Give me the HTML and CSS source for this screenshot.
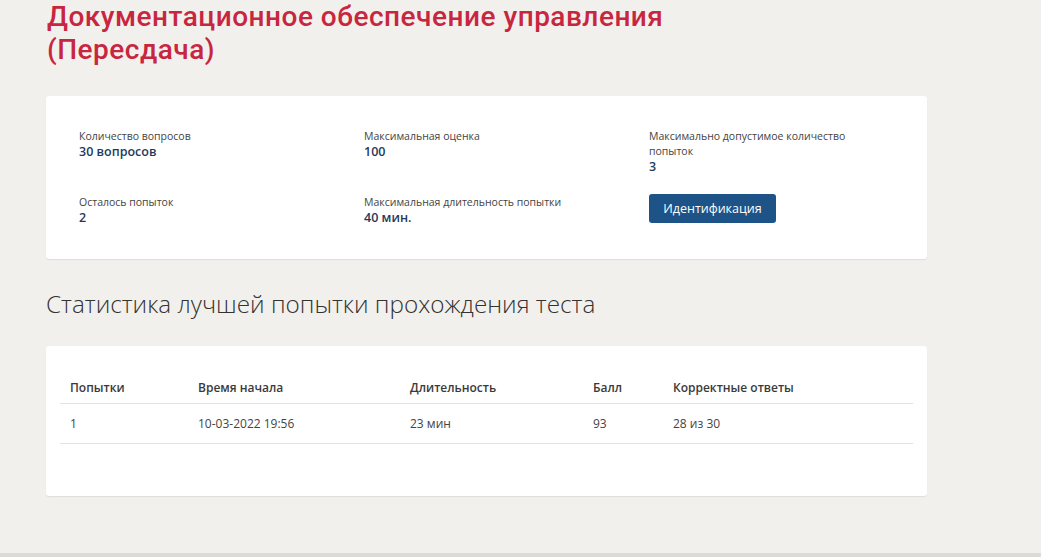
FILE: index.html
```html
<!DOCTYPE html>
<html lang="ru">
<head>
<meta charset="utf-8">
<link rel="stylesheet" href="styles.css">
</head>
<body>
<div class="page">
  <h1 class="title">Документационное обеспечение управления<br>(Пересдача)</h1>

  <div class="card info">
    <div class="item">
      <div class="label">Количество вопросов</div>
      <div class="value">30 вопросов</div>
    </div>
    <div class="item">
      <div class="label">Максимальная оценка</div>
      <div class="value">100</div>
    </div>
    <div class="item">
      <div class="label">Максимально допустимое количество попыток</div>
      <div class="value">3</div>
    </div>
    <div class="item">
      <div class="label">Осталось попыток</div>
      <div class="value">2</div>
    </div>
    <div class="item">
      <div class="label">Максимальная длительность попытки</div>
      <div class="value">40 мин.</div>
    </div>
    <div class="item">
      <button class="btn">Идентификация</button>
    </div>
  </div>

  <h2 class="subtitle">Статистика лучшей попытки прохождения теста</h2>

  <div class="card stats">
    <table class="table">
      <thead>
        <tr>
          <th class="c1">Попытки</th>
          <th class="c2">Время начала</th>
          <th class="c3">Длительность</th>
          <th class="c4">Балл</th>
          <th class="c5">Корректные ответы</th>
        </tr>
      </thead>
      <tbody>
        <tr>
          <td>1</td>
          <td>10-03-2022 19:56</td>
          <td>23 мин</td>
          <td>93</td>
          <td>28 из 30</td>
        </tr>
      </tbody>
    </table>
  </div>
</div>
<div class="footer-band"></div>
</body>
</html>
```

FILE: styles.css
```css
html, body {
  margin: 0;
  padding: 0;
}
body {
  background: #f2f0ed;
  font-family: "Open Sans", "Noto Sans", sans-serif;
  color: #333;
  height: 557px;
  overflow: hidden;
  position: relative;
}
.page {
  padding: 0 114px 0 46px;
}
.title {
  margin: 0;
  padding: 0 0 0 1px;
  font-family: Roboto, "Open Sans", sans-serif;
  font-weight: 500;
  font-size: 28px;
  line-height: 33px;
  letter-spacing: 0.5px;
  color: #c8263f;
}
.card {
  background: #fff;
  border-radius: 3px;
  box-shadow: 0 1px 1px rgba(0,0,0,0.08);
}
.info {
  margin-top: 30px;
  height: 163px;
  box-sizing: border-box;
  padding: 33px 0 0 33px;
  display: grid;
  grid-template-columns: 285px 285px 215px;
  grid-template-rows: 66px auto;
}
.label {
  font-size: 10.5px;
  line-height: 15px;
  color: #444;
}
.value {
  font-size: 12.5px;
  line-height: 16px;
  font-weight: 600;
  color: #1e3a5c;
}
.btn {
  margin-top: -1px;
  width: 127px;
  height: 29px;
  background: #1d5387;
  color: #fff;
  border: 0;
  border-radius: 3px;
  font-family: "Open Sans", sans-serif;
  font-size: 12.5px;
  font-weight: 500;
  padding: 0;
}
.subtitle {
  margin: 29px 0 0 0;
  font-weight: 300;
  font-size: 24.3px;
  line-height: 32px;
  color: #333;
}
.stats {
  margin-top: 26px;
  height: 150px;
  box-sizing: border-box;
  padding: 25px 14px 0 14px;
}
.table {
  width: 100%;
  border-collapse: collapse;
  font-size: 12px;
}
.table th {
  text-align: left;
  font-weight: 600;
  color: #3a3a3a;
  padding: 8px 10px 6px;
  line-height: 18px;
  border-bottom: 1px solid #e2e2e2;
}
.table td {
  padding: 10px 10px 10px;
  line-height: 19px;
  color: #444;
  border-bottom: 1px solid #e2e2e2;
}
.c1 { width: 108px; }
.c2 { width: 192px; }
.c3 { width: 163px; }
.c4 { width: 60px; }
.footer-band {
  position: absolute;
  left: 0;
  right: 0;
  bottom: 0;
  height: 4px;
  background: #dcdbd6;
}
```
